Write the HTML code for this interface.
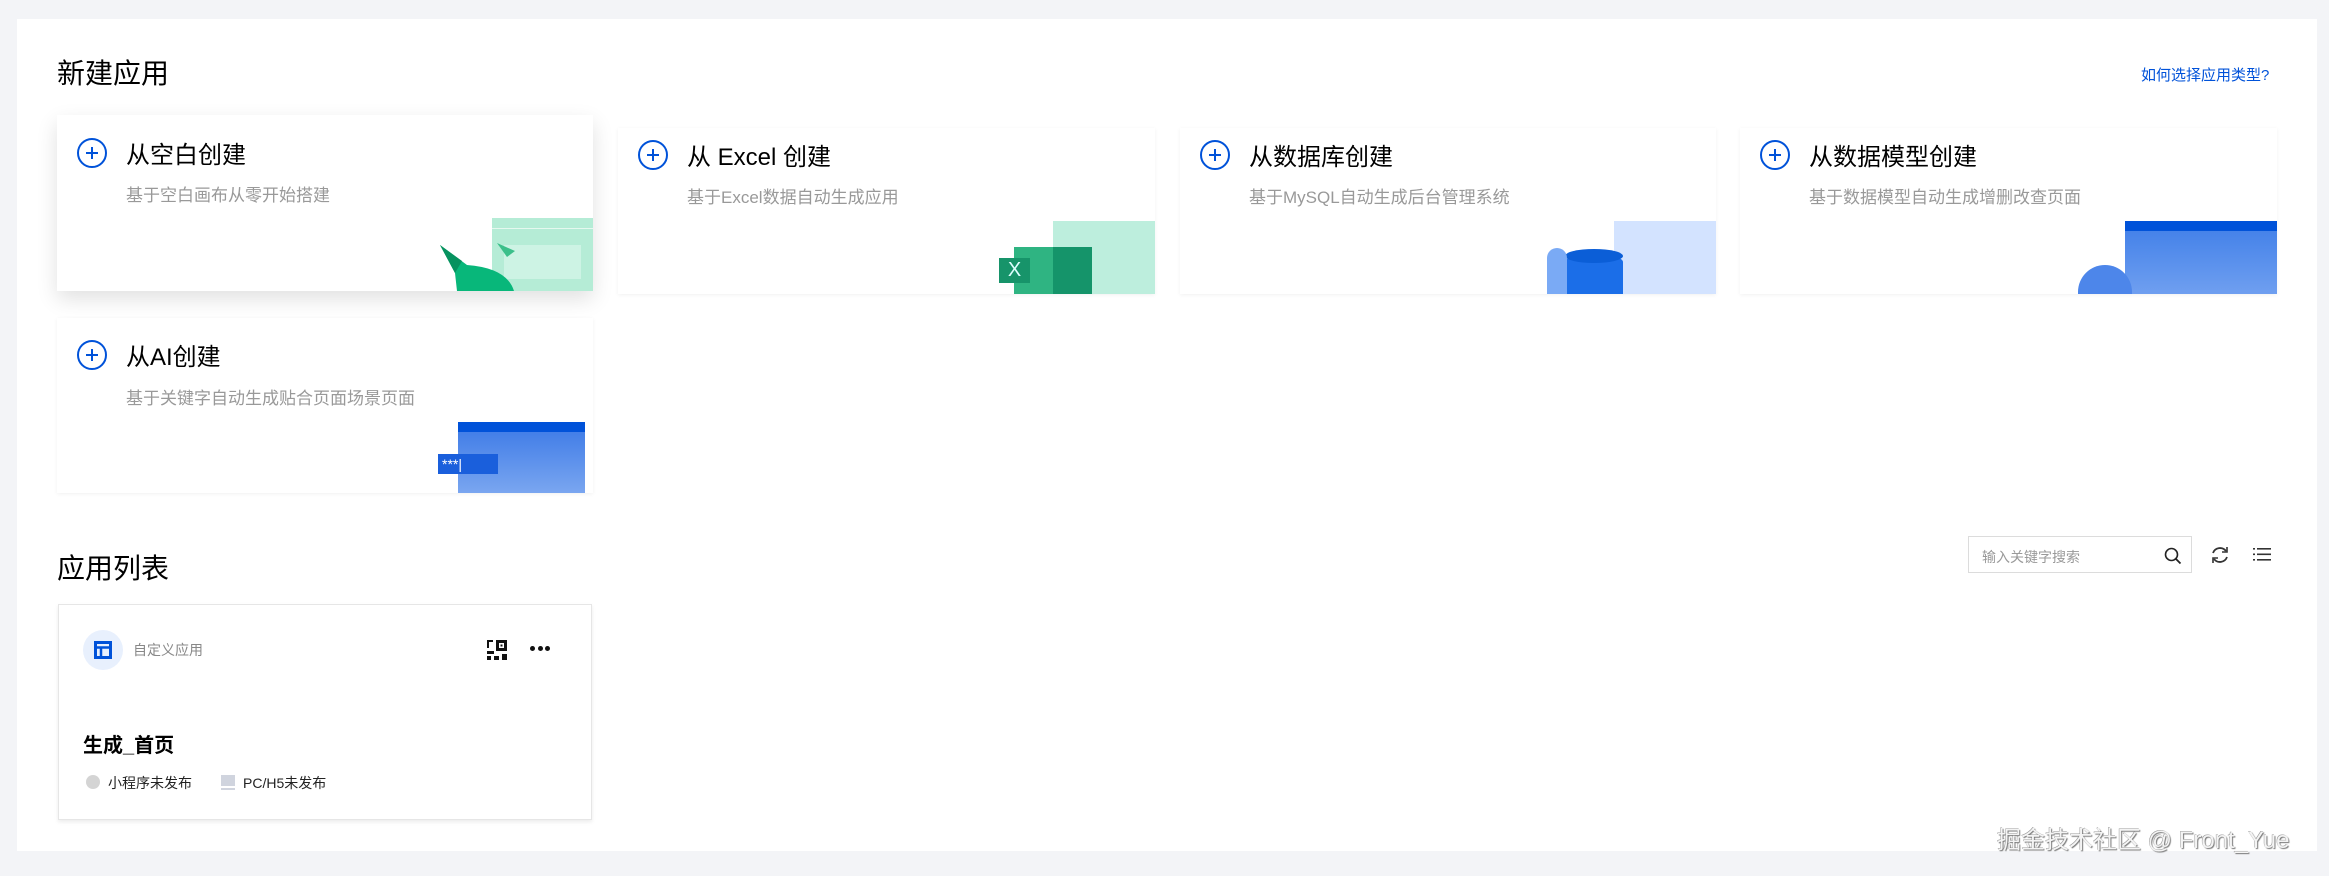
<!DOCTYPE html>
<html><head><meta charset="utf-8"><style>
*{margin:0;padding:0;box-sizing:border-box}
body{width:2329px;height:876px;background:#f3f4f7;font-family:"Liberation Sans","Noto Sans CJK SC",sans-serif;position:relative;overflow:hidden}
.panel{position:absolute;left:17px;top:19px;width:2300px;height:832px;background:#fff}
.abs{position:absolute}
.h{font-size:28px;color:#000;line-height:1}
.card{position:absolute;background:#fff;box-shadow:0 1px 4px rgba(0,0,0,0.06);overflow:hidden}
.card.hov{box-shadow:0 8px 20px rgba(0,0,0,0.12)}
.plus{position:absolute;left:20px;width:30px;height:30px;border:2px solid #0052d9;border-radius:50%}
.plus:before{content:"";position:absolute;left:7px;top:12px;width:12px;height:2px;background:#0052d9}
.plus:after{content:"";position:absolute;left:12px;top:7px;width:2px;height:12px;background:#0052d9}
.ct{position:absolute;left:69px;font-size:24px;color:#000;line-height:1}
.cs{position:absolute;left:69px;font-size:17px;color:#999;line-height:1}
</style></head><body>
<div class="panel"></div>
<div class="abs h" style="left:57px;top:60px">新建应用</div>
<div class="abs" style="left:2141px;top:64px;font-size:15px;color:#0052d9">如何选择应用类型?</div>

<div class="card hov" style="left:57px;top:115px;width:536px;height:176px">
  <div class="plus" style="top:23px"></div>
  <div class="ct" style="top:29px">从空白创建</div>
  <div class="cs" style="top:72px">基于空白画布从零开始搭建</div>
  <div class="abs" style="left:435px;top:103px;width:101px;height:73px;background:#b5ecd6"></div>
  <div class="abs" style="left:435px;top:113px;width:101px;height:1px;background:#e5f8ef"></div>
  <div class="abs" style="left:447px;top:130px;width:77px;height:34px;background:#cdf3e4"></div>
  <svg class="abs" style="left:380px;top:128px" width="110" height="48"><path d="M60 0 l18 8 -8 6z" fill="#3bbf8a"/><path d="M3 2 L30 22 Q70 25 77 48 L20 48 L18 30 Z" fill="#08b77a"/><path d="M3 2 L25 18 L18 30 Z" fill="#07925f"/></svg>
</div>

<div class="card" style="left:618px;top:128px;width:537px;height:166px">
  <div class="plus" style="top:12px"></div>
  <div class="ct" style="top:18px">从 Excel 创建</div>
  <div class="cs" style="top:61px">基于Excel数据自动生成应用</div>
  <div class="abs" style="left:435px;top:93px;width:102px;height:73px;background:#bdeedd"></div>
  <div class="abs" style="left:396px;top:119px;width:78px;height:47px;background:#2fb482"></div>
  <div class="abs" style="left:435px;top:119px;width:39px;height:47px;background:#15946a"></div>
  <div class="abs" style="left:381px;top:130px;width:31px;height:25px;background:#17946a;color:#dff;font-size:20px;text-align:center;line-height:25px">X</div>
</div>

<div class="card" style="left:1180px;top:128px;width:536px;height:166px">
  <div class="plus" style="top:12px"></div>
  <div class="ct" style="top:18px">从数据库创建</div>
  <div class="cs" style="top:61px">基于MySQL自动生成后台管理系统</div>
  <div class="abs" style="left:434px;top:93px;width:102px;height:73px;background:#d3e3ff"></div>
  <div class="abs" style="left:385px;top:126px;width:58px;height:40px;background:#1b6ee8;border-radius:28px 28px 0 0/8px 8px 0 0"></div>
  <div class="abs" style="left:385px;top:121px;width:58px;height:14px;background:#0b5ed7;border-radius:50%"></div>
  <div class="abs" style="left:367px;top:120px;width:20px;height:46px;background:#7aaaf5;border-radius:10px 10px 0 0"></div>
</div>

<div class="card" style="left:1740px;top:128px;width:537px;height:166px">
  <div class="plus" style="top:12px"></div>
  <div class="ct" style="top:18px">从数据模型创建</div>
  <div class="cs" style="top:61px">基于数据模型自动生成增删改查页面</div>
  <div class="abs" style="left:385px;top:93px;width:152px;height:73px;background:linear-gradient(#3f7ee8,#6f9ff0)"></div>
  <div class="abs" style="left:385px;top:93px;width:152px;height:10px;background:#0052d9"></div>
  <div class="abs" style="left:338px;top:137px;width:54px;height:29px;background:#4d86ea;border-radius:27px 27px 0 0"></div>
</div>

<div class="card" style="left:57px;top:318px;width:536px;height:175px">
  <div class="plus" style="top:22px"></div>
  <div class="ct" style="top:28px">从AI创建</div>
  <div class="cs" style="top:72px">基于关键字自动生成贴合页面场景页面</div>
  <div class="abs" style="left:401px;top:104px;width:127px;height:71px;background:linear-gradient(#3a78e6,#7aa6f0)"></div>
  <div class="abs" style="left:401px;top:104px;width:127px;height:10px;background:#0052d9"></div>
  <div class="abs" style="left:381px;top:136px;width:60px;height:20px;background:#1a5fdc;color:#fff;font-size:14px;line-height:20px;padding-left:4px">***|</div>
</div>

<div class="abs h" style="left:57px;top:555px">应用列表</div>
<div class="abs" style="left:1968px;top:536px;width:224px;height:37px;border:1px solid #dcdcdc;background:#fff">
  <span class="abs" style="left:13px;top:10px;font-size:14px;color:#999">输入关键字搜索</span>
  <svg class="abs" style="left:195px;top:10px" width="18" height="18"><circle cx="7.5" cy="7.5" r="6" fill="none" stroke="#222" stroke-width="1.6"/><path d="M12 12 L16.5 16.5" stroke="#222" stroke-width="1.8"/></svg>
</div>
<svg class="abs" style="left:2210px;top:545px" width="20" height="20"><path d="M16 6 A7.5 7.5 0 0 0 3 8" fill="none" stroke="#333" stroke-width="1.8"/><path d="M4 14 A7.5 7.5 0 0 0 17 12" fill="none" stroke="#333" stroke-width="1.8"/><path d="M17 2 V7 H12" fill="none" stroke="#333" stroke-width="1.6"/><path d="M3 18 V13 H8" fill="none" stroke="#333" stroke-width="1.6"/></svg>
<svg class="abs" style="left:2253px;top:546px" width="18" height="17"><g fill="#333"><rect x="0" y="2" width="2" height="1.6"/><rect x="4" y="2" width="14" height="1.6"/><rect x="0" y="7.5" width="2" height="1.6"/><rect x="4" y="7.5" width="14" height="1.6"/><rect x="0" y="13" width="2" height="1.6"/><rect x="4" y="13" width="14" height="1.6"/></g></svg>

<div class="abs" style="left:58px;top:604px;width:534px;height:216px;border:1px solid #e6e6e6;background:#fff;box-shadow:0 2px 4px rgba(0,0,0,0.08)"></div>
<div class="abs" style="left:83px;top:630px;width:40px;height:40px;border-radius:50%;background:#e8f0fd"></div>
<svg class="abs" style="left:94px;top:641px" width="18" height="18"><rect x="1.5" y="1.5" width="15" height="15" fill="none" stroke="#0052d9" stroke-width="3"/><path d="M1.5 6.5 H16.5 M7 6.5 V16.5" stroke="#0052d9" stroke-width="2.5"/></svg>
<div class="abs" style="left:133px;top:640px;font-size:14px;color:#888">自定义应用</div>
<svg class="abs" style="left:487px;top:640px" width="20" height="20"><g fill="#111"><rect x="0" y="0" width="6" height="2"/><rect x="0" y="0" width="2" height="8"/><rect x="9" y="0" width="11" height="11" /><rect x="0" y="11" width="7" height="3"/><rect x="0" y="16" width="4" height="4"/><rect x="7" y="16" width="5" height="4"/><rect x="15" y="14" width="5" height="6"/></g><rect x="12" y="3" width="5" height="5" fill="#fff"/><rect x="13.5" y="4.5" width="2" height="2" fill="#111"/></svg>
<div class="abs" style="left:530px;top:646px;width:20px;height:6px"><span class="abs" style="left:0;top:0;width:5px;height:5px;border-radius:50%;background:#111"></span><span class="abs" style="left:7.5px;top:0;width:5px;height:5px;border-radius:50%;background:#111"></span><span class="abs" style="left:15px;top:0;width:5px;height:5px;border-radius:50%;background:#111"></span></div>
<div class="abs" style="left:83px;top:729px;font-size:20px;font-weight:bold;color:#000">生成_首页</div>
<div class="abs" style="left:86px;top:775px;width:14px;height:14px;border-radius:50%;background:#d4d4d4"></div>
<div class="abs" style="left:108px;top:773px;font-size:14px;color:#222">小程序未发布</div>
<div class="abs" style="left:221px;top:775px;width:14px;height:11px;background:#d0d4de"></div>
<div class="abs" style="left:221px;top:788px;width:14px;height:2px;background:#d0d4de"></div>
<div class="abs" style="left:243px;top:773px;font-size:14px;color:#222">PC/H5未发布</div>

<div class="abs" style="left:1997px;top:820px;font-size:24px;color:#f4f4f4;text-shadow:1px 1px 1px #777,-0.5px -0.5px 0 #999;white-space:nowrap">掘金技术社区 @ Front_Yue</div>
</body></html>
